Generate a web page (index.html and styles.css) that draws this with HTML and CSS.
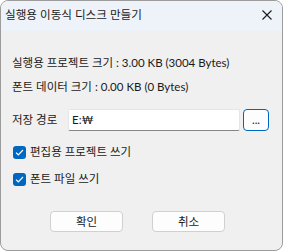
FILE: index.html
```html
<!DOCTYPE html>
<html lang="ko">
<head>
    <meta charset="UTF-8">
    <title>실행용 이동식 디스크 만들기</title>
    <link rel="stylesheet" href="styles.css">
</head>
<body>
    <div class="window">
        <div class="titlebar">
            <span class="title">실행용 이동식 디스크 만들기</span>
            <svg class="close" width="10" height="10" viewBox="0 0 10 10">
                <path d="M0.5 0.5 L9.5 9.5 M9.5 0.5 L0.5 9.5" stroke="#1a1a1a" stroke-width="1.1" fill="none"/>
            </svg>
        </div>
        <div class="content">
            <div class="info first">실행용 프로젝트 크기 : 3.00 KB (3004 Bytes)</div>
            <div class="info second">폰트 데이터 크기 : 0.00 KB (0 Bytes)</div>

            <div class="path-row">
                <span class="path-label">저장 경로</span>
                <div class="path-input">E:₩</div>
                <div class="browse">...</div>
            </div>

            <label class="check first-check">
                <span class="box"><svg width="9" height="7" viewBox="0 0 9 7"><path d="M1 3.6 L3.3 5.8 L8 1" stroke="#fff" stroke-width="1.2" fill="none"/></svg></span>
                편집용 프로젝트 쓰기
            </label>
            <label class="check second-check">
                <span class="box"><svg width="9" height="7" viewBox="0 0 9 7"><path d="M1 3.6 L3.3 5.8 L8 1" stroke="#fff" stroke-width="1.2" fill="none"/></svg></span>
                폰트 파일 쓰기
            </label>

            <div class="buttons">
                <div class="btn">확인</div>
                <div class="btn">취소</div>
            </div>
        </div>
    </div>
</body>
</html>
```

FILE: styles.css
```css
body {
    margin: 0;
    font-family: Lato, "Noto Sans CJK KR", sans-serif;
    font-size: 11.5px;
    color: #1a1a1a;
}
.window {
    width: 283px;
    height: 251px;
    box-sizing: border-box;
    border: 1px solid #9c9c9c;
    border-radius: 8px;
    overflow: hidden;
    background: #f0f0f0;
}
.titlebar {
    height: 28px;
    background: #eef2f9;
    display: flex;
    align-items: center;
    justify-content: space-between;
    padding: 0 10px 2px 4px;
}
.title {
    font-size: 11.6px;
    line-height: 16px;
}
.close {
    display: block;
}
.content {
    padding: 0 12px 0 11px;
}
.info {
    line-height: 16px;
}
.info.first {
    margin-top: 24px;
}
.info.second {
    margin-top: 8px;
}
.path-row {
    display: flex;
    align-items: center;
    margin-top: 14px;
    height: 22px;
}
.path-label {
    width: 56px;
    line-height: 16px;
}
.path-input {
    width: 172px;
    height: 22px;
    box-sizing: border-box;
    background: #fff;
    border: 1px solid #e5e5e5;
    border-bottom-color: #858585;
    border-radius: 2px;
    padding: 0 3px;
    line-height: 19px;
}
.browse {
    width: 26px;
    height: 22px;
    margin-left: 3px;
    box-sizing: border-box;
    background: #fdfdfd;
    border: 1px solid #0067c0;
    border-radius: 4px;
    text-align: center;
    line-height: 20px;
}
.check {
    display: flex;
    align-items: center;
    gap: 4px;
    line-height: 16px;
    padding-left: 1px;
}
.first-check {
    margin-top: 13px;
}
.second-check {
    margin-top: 11px;
}
.box {
    width: 13px;
    height: 13px;
    border-radius: 3px;
    background: #0067c0;
    display: flex;
    align-items: center;
    justify-content: center;
}
.box svg {
    display: block;
}
.buttons {
    display: flex;
    gap: 29px;
    margin-top: 24px;
    padding-left: 38px;
}
.btn {
    width: 73px;
    height: 21px;
    box-sizing: border-box;
    background: #fdfdfd;
    border: 1px solid #d0d0d0;
    border-radius: 4px;
    text-align: center;
    line-height: 19px;
}
```
